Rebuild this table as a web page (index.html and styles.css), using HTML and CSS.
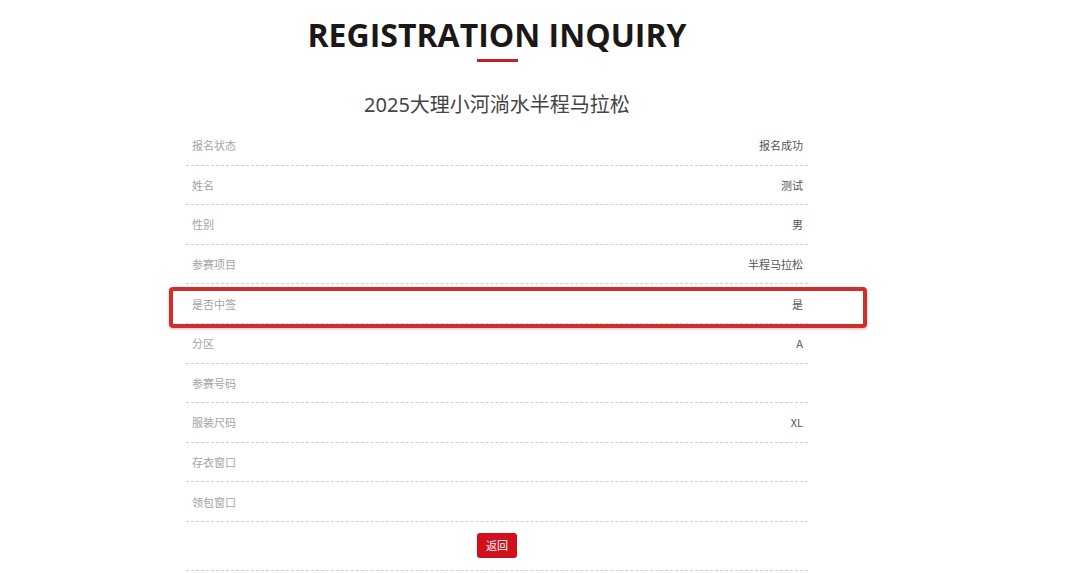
FILE: index.html
```html
<!DOCTYPE html>
<html lang="zh-CN">
<head>
  <meta charset="UTF-8" />
  <meta name="viewport" content="width=device-width, initial-scale=1.0"/>
  <title>Registration Inquiry</title>
  <link rel="stylesheet" href="styles.css">
</head>
<body>
  <div class="page">
    <h1 class="title">REGISTRATION INQUIRY</h1>
    <div class="title-bar"></div>
    <h2 class="race">2025大理小河淌水半程马拉松</h2>

    <div class="info">
      <div class="row"><span class="label">报名状态</span><span class="value">报名成功</span></div>
      <div class="row"><span class="label">姓名</span><span class="value">测试</span></div>
      <div class="row"><span class="label">性别</span><span class="value">男</span></div>
      <div class="row"><span class="label">参赛项目</span><span class="value">半程马拉松</span></div>
      <div class="row marked"><span class="label">是否中签</span><span class="value">是</span></div>
      <div class="row"><span class="label">分区</span><span class="value">A</span></div>
      <div class="row"><span class="label">参赛号码</span><span class="value"></span></div>
      <div class="row"><span class="label">服装尺码</span><span class="value">XL</span></div>
      <div class="row"><span class="label">存衣窗口</span><span class="value"></span></div>
      <div class="row"><span class="label">领包窗口</span><span class="value"></span></div>
      <div class="actions"><a class="btn-back" href="#">返回</a></div>
    </div>
  </div>
</body>
</html>
```

FILE: styles.css
```css
* { margin: 0; padding: 0; box-sizing: border-box; }
html, body {
  width: 100%;
  height: 100%;
  overflow: hidden;
  background: #fff;
  font-family: 'Noto Sans', 'Noto Sans CJK SC', sans-serif;
}

.page {
  width: 622px;
  margin-left: 186px;
  padding-top: 11px;
}

.title {
  font-family: 'Open Sans', 'Noto Sans', sans-serif;
  font-weight: 700;
  font-size: 32px;
  line-height: 48px;
  color: #1c1818;
  text-align: center;
}

.title-bar {
  width: 41px;
  height: 3px;
  margin: 0 auto;
  background: #c0222b;
}

.race {
  margin-top: 29px;
  font-family: 'Noto Sans', 'Noto Sans CJK SC', sans-serif;
  font-weight: 400;
  font-size: 20px;
  line-height: 28px;
  color: #444;
  text-align: center;
}

.info {
  margin-top: 7px;
}

.row {
  position: relative;
  display: flex;
  justify-content: space-between;
  align-items: center;
  height: 39.6px;
  padding: 0 5px 0 6px;
  border-bottom: 1px dashed #cfcfcf;
  font-size: 11px;
  font-family: 'Noto Sans CJK SC', sans-serif;
}

.label { color: #a3a3a3; }
.value { color: #555; }

/* highlight box drawn over the lottery row */
.marked::after {
  content: '';
  box-sizing: border-box;
  position: absolute;
  left: -17px;
  right: -59px;
  top: 3px;
  height: 41px;
  border: 4px solid #cb302d;
  border-radius: 4px;
  box-shadow: 0 1px 3px rgba(150, 30, 30, 0.35);
}

.actions {
  display: flex;
  justify-content: center;
  align-items: center;
  height: 49px;
  border-bottom: 1px dashed #cfcfcf;
}

.btn-back {
  display: block;
  width: 40px;
  height: 25px;
  line-height: 25px;
  text-align: center;
  background: #d0111b;
  color: #fff;
  font-size: 11px;
  text-decoration: none;
  border-radius: 3px;
  font-family: 'Noto Sans CJK SC', sans-serif;
}
```
